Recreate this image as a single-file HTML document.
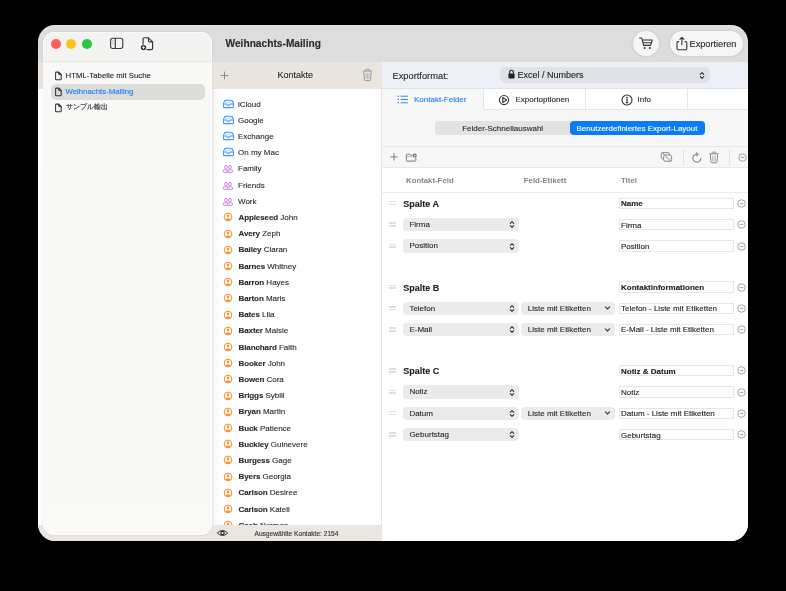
<!DOCTYPE html>
<html><head><meta charset="utf-8"><style>
*{box-sizing:border-box;margin:0;padding:0}
html,body{width:786px;height:591px;background:#000;overflow:hidden}
body{font-family:"Liberation Sans",sans-serif;color:#262626;position:relative}
#root{position:absolute;left:0;top:0;width:786px;height:591px;will-change:transform}
.a{position:absolute}
svg.a{overflow:visible}
.t{position:absolute;white-space:nowrap;line-height:1;-webkit-text-stroke:0.12px currentColor}
</style></head><body><div id="root">
<div class="a" style="left:38px;top:25px;width:710px;height:516px;border-radius:17px;overflow:hidden;background:#dddddd;box-shadow:inset 0 1px 0 rgba(255,255,255,.25)">
<div class="a" style="left:0;top:63px;width:343px;height:437px;background:#fff"></div>
<div class="a" style="left:0;top:37px;width:343px;height:26.8px;background:#ebe5df"></div>
<div class="a" style="left:0;top:500px;width:343px;height:16px;background:#ebe6e0"></div>
<div class="a" style="left:343px;top:37px;width:367px;height:479px;background:#fff"></div>
</div>
<svg class="a" style="left:219px;top:70px" width="11" height="11" viewBox="0 0 11 11"><path d="M5.5 1.6 V9.4 M1.6 5.5 H9.4" stroke="#8a8a8a" stroke-width="1"/></svg>
<div class="t" style="left:277.5px;top:71px;font-size:9px;font-weight:400;color:#2a2a2a;">Kontakte</div>
<svg class="a" style="left:361px;top:68px" width="13" height="14" viewBox="0 0 13 14"><path d="M2 3 H11" stroke="#9a9a9a" stroke-width="1"/><path d="M4.6 3 V2 Q4.6 1.3 5.3 1.3 H7.7 Q8.4 1.3 8.4 2 V3" fill="none" stroke="#9a9a9a" stroke-width="1"/><path d="M2.8 3.4 L3.5 11.8 Q3.6 12.6 4.4 12.6 H8.6 Q9.4 12.6 9.5 11.8 L10.2 3.4" fill="none" stroke="#9a9a9a" stroke-width="1"/><path d="M5 5 L5.2 11 M6.5 5 V11 M8 5 L7.8 11" stroke="#b0b0b0" stroke-width=".8"/></svg>
<div class="a" style="left:212px;top:88px;width:11px;height:437px;background:linear-gradient(90deg,rgba(0,0,0,.055),rgba(0,0,0,.02) 40%,rgba(0,0,0,0));"></div>
<div class="a" style="left:212px;top:88px;width:169px;height:437px;overflow:hidden"><svg class="a" style="left:9.8px;top:10.8px" width="13" height="10" viewBox="0 0 13 10"><path d="M1.5 8 V5 Q1.5 4.2 1.9 3.4 L2.8 1.9 Q3.2 1.3 4 1.3 H9 Q9.8 1.3 10.2 1.9 L11.1 3.4 Q11.5 4.2 11.5 5 V8 Q11.5 8.6 10.9 8.6 H2.1 Q1.5 8.6 1.5 8 Z" fill="none" stroke="#3d9af6" stroke-width="1.1" stroke-linejoin="round"/><path d="M1.5 5 H4.3 L6.5 6.6 L8.7 5 H11.5" fill="none" stroke="#3d9af6" stroke-width="1.1" stroke-linejoin="round"/><path d="M3.2 3.2 H9.8" stroke="#a5d0fa" stroke-width=".7"/></svg><div class="t" style="left:26px;top:13px;font-size:8px;color:#2a2a2a">iCloud</div><svg class="a" style="left:9.8px;top:27.0px" width="13" height="10" viewBox="0 0 13 10"><path d="M1.5 8 V5 Q1.5 4.2 1.9 3.4 L2.8 1.9 Q3.2 1.3 4 1.3 H9 Q9.8 1.3 10.2 1.9 L11.1 3.4 Q11.5 4.2 11.5 5 V8 Q11.5 8.6 10.9 8.6 H2.1 Q1.5 8.6 1.5 8 Z" fill="none" stroke="#3d9af6" stroke-width="1.1" stroke-linejoin="round"/><path d="M1.5 5 H4.3 L6.5 6.6 L8.7 5 H11.5" fill="none" stroke="#3d9af6" stroke-width="1.1" stroke-linejoin="round"/><path d="M3.2 3.2 H9.8" stroke="#a5d0fa" stroke-width=".7"/></svg><div class="t" style="left:26px;top:29px;font-size:8px;color:#2a2a2a">Google</div><svg class="a" style="left:9.8px;top:43.2px" width="13" height="10" viewBox="0 0 13 10"><path d="M1.5 8 V5 Q1.5 4.2 1.9 3.4 L2.8 1.9 Q3.2 1.3 4 1.3 H9 Q9.8 1.3 10.2 1.9 L11.1 3.4 Q11.5 4.2 11.5 5 V8 Q11.5 8.6 10.9 8.6 H2.1 Q1.5 8.6 1.5 8 Z" fill="none" stroke="#3d9af6" stroke-width="1.1" stroke-linejoin="round"/><path d="M1.5 5 H4.3 L6.5 6.6 L8.7 5 H11.5" fill="none" stroke="#3d9af6" stroke-width="1.1" stroke-linejoin="round"/><path d="M3.2 3.2 H9.8" stroke="#a5d0fa" stroke-width=".7"/></svg><div class="t" style="left:26px;top:45px;font-size:8px;color:#2a2a2a">Exchange</div><svg class="a" style="left:9.8px;top:59.4px" width="13" height="10" viewBox="0 0 13 10"><path d="M1.5 8 V5 Q1.5 4.2 1.9 3.4 L2.8 1.9 Q3.2 1.3 4 1.3 H9 Q9.8 1.3 10.2 1.9 L11.1 3.4 Q11.5 4.2 11.5 5 V8 Q11.5 8.6 10.9 8.6 H2.1 Q1.5 8.6 1.5 8 Z" fill="none" stroke="#3d9af6" stroke-width="1.1" stroke-linejoin="round"/><path d="M1.5 5 H4.3 L6.5 6.6 L8.7 5 H11.5" fill="none" stroke="#3d9af6" stroke-width="1.1" stroke-linejoin="round"/><path d="M3.2 3.2 H9.8" stroke="#a5d0fa" stroke-width=".7"/></svg><div class="t" style="left:26px;top:61px;font-size:8px;color:#2a2a2a">On my Mac</div><svg class="a" style="left:10px;top:76.3px" width="13" height="10" viewBox="0 0 13 10"><ellipse cx="3.9" cy="3.1" rx="1.3" ry="1.85" fill="none" stroke="#d57bee" stroke-width="1"/><ellipse cx="7.9" cy="3.1" rx="1.3" ry="1.85" fill="none" stroke="#d57bee" stroke-width="1"/><rect x="1.1" y="5.9" width="5" height="2.5" rx="1.25" fill="none" stroke="#d57bee" stroke-width="1"/><rect x="5.3" y="5.9" width="5.3" height="2.5" rx="1.25" fill="none" stroke="#d57bee" stroke-width="1"/></svg><div class="t" style="left:26px;top:77px;font-size:8px;color:#2a2a2a">Family</div><svg class="a" style="left:10px;top:92.5px" width="13" height="10" viewBox="0 0 13 10"><ellipse cx="3.9" cy="3.1" rx="1.3" ry="1.85" fill="none" stroke="#d57bee" stroke-width="1"/><ellipse cx="7.9" cy="3.1" rx="1.3" ry="1.85" fill="none" stroke="#d57bee" stroke-width="1"/><rect x="1.1" y="5.9" width="5" height="2.5" rx="1.25" fill="none" stroke="#d57bee" stroke-width="1"/><rect x="5.3" y="5.9" width="5.3" height="2.5" rx="1.25" fill="none" stroke="#d57bee" stroke-width="1"/></svg><div class="t" style="left:26px;top:94px;font-size:8px;color:#2a2a2a">Friends</div><svg class="a" style="left:10px;top:108.7px" width="13" height="10" viewBox="0 0 13 10"><ellipse cx="3.9" cy="3.1" rx="1.3" ry="1.85" fill="none" stroke="#d57bee" stroke-width="1"/><ellipse cx="7.9" cy="3.1" rx="1.3" ry="1.85" fill="none" stroke="#d57bee" stroke-width="1"/><rect x="1.1" y="5.9" width="5" height="2.5" rx="1.25" fill="none" stroke="#d57bee" stroke-width="1"/><rect x="5.3" y="5.9" width="5.3" height="2.5" rx="1.25" fill="none" stroke="#d57bee" stroke-width="1"/></svg><div class="t" style="left:26px;top:110px;font-size:8px;color:#2a2a2a">Work</div><svg class="a" style="left:11px;top:124.4px" width="10" height="10" viewBox="0 0 10 10"><circle cx="5" cy="5" r="3.85" fill="none" stroke="#fd8b25" stroke-width="1"/><ellipse cx="5" cy="4" rx="1.1" ry="1.4" fill="#fd8b25"/><path d="M2.3 7.3 Q3 6.4 5 6.4 Q7 6.4 7.7 7.3 Q6.8 8.6 5 8.6 Q3.2 8.6 2.3 7.3Z" fill="#fd8b25"/></svg><div class="t" style="left:26.5px;top:126px;font-size:8px;color:#2a2a2a"><b style="font-weight:700;letter-spacing:-.1px">Appleseed</b> John</div><svg class="a" style="left:11px;top:140.6px" width="10" height="10" viewBox="0 0 10 10"><circle cx="5" cy="5" r="3.85" fill="none" stroke="#fd8b25" stroke-width="1"/><ellipse cx="5" cy="4" rx="1.1" ry="1.4" fill="#fd8b25"/><path d="M2.3 7.3 Q3 6.4 5 6.4 Q7 6.4 7.7 7.3 Q6.8 8.6 5 8.6 Q3.2 8.6 2.3 7.3Z" fill="#fd8b25"/></svg><div class="t" style="left:26.5px;top:142px;font-size:8px;color:#2a2a2a"><b style="font-weight:700;letter-spacing:-.1px">Avery</b> Zeph</div><svg class="a" style="left:11px;top:156.8px" width="10" height="10" viewBox="0 0 10 10"><circle cx="5" cy="5" r="3.85" fill="none" stroke="#fd8b25" stroke-width="1"/><ellipse cx="5" cy="4" rx="1.1" ry="1.4" fill="#fd8b25"/><path d="M2.3 7.3 Q3 6.4 5 6.4 Q7 6.4 7.7 7.3 Q6.8 8.6 5 8.6 Q3.2 8.6 2.3 7.3Z" fill="#fd8b25"/></svg><div class="t" style="left:26.5px;top:158px;font-size:8px;color:#2a2a2a"><b style="font-weight:700;letter-spacing:-.1px">Bailey</b> Ciaran</div><svg class="a" style="left:11px;top:173.0px" width="10" height="10" viewBox="0 0 10 10"><circle cx="5" cy="5" r="3.85" fill="none" stroke="#fd8b25" stroke-width="1"/><ellipse cx="5" cy="4" rx="1.1" ry="1.4" fill="#fd8b25"/><path d="M2.3 7.3 Q3 6.4 5 6.4 Q7 6.4 7.7 7.3 Q6.8 8.6 5 8.6 Q3.2 8.6 2.3 7.3Z" fill="#fd8b25"/></svg><div class="t" style="left:26.5px;top:175px;font-size:8px;color:#2a2a2a"><b style="font-weight:700;letter-spacing:-.1px">Barnes</b> Whitney</div><svg class="a" style="left:11px;top:189.2px" width="10" height="10" viewBox="0 0 10 10"><circle cx="5" cy="5" r="3.85" fill="none" stroke="#fd8b25" stroke-width="1"/><ellipse cx="5" cy="4" rx="1.1" ry="1.4" fill="#fd8b25"/><path d="M2.3 7.3 Q3 6.4 5 6.4 Q7 6.4 7.7 7.3 Q6.8 8.6 5 8.6 Q3.2 8.6 2.3 7.3Z" fill="#fd8b25"/></svg><div class="t" style="left:26.5px;top:191px;font-size:8px;color:#2a2a2a"><b style="font-weight:700;letter-spacing:-.1px">Barron</b> Hayes</div><svg class="a" style="left:11px;top:205.4px" width="10" height="10" viewBox="0 0 10 10"><circle cx="5" cy="5" r="3.85" fill="none" stroke="#fd8b25" stroke-width="1"/><ellipse cx="5" cy="4" rx="1.1" ry="1.4" fill="#fd8b25"/><path d="M2.3 7.3 Q3 6.4 5 6.4 Q7 6.4 7.7 7.3 Q6.8 8.6 5 8.6 Q3.2 8.6 2.3 7.3Z" fill="#fd8b25"/></svg><div class="t" style="left:26.5px;top:207px;font-size:8px;color:#2a2a2a"><b style="font-weight:700;letter-spacing:-.1px">Barton</b> Maris</div><svg class="a" style="left:11px;top:221.6px" width="10" height="10" viewBox="0 0 10 10"><circle cx="5" cy="5" r="3.85" fill="none" stroke="#fd8b25" stroke-width="1"/><ellipse cx="5" cy="4" rx="1.1" ry="1.4" fill="#fd8b25"/><path d="M2.3 7.3 Q3 6.4 5 6.4 Q7 6.4 7.7 7.3 Q6.8 8.6 5 8.6 Q3.2 8.6 2.3 7.3Z" fill="#fd8b25"/></svg><div class="t" style="left:26.5px;top:223px;font-size:8px;color:#2a2a2a"><b style="font-weight:700;letter-spacing:-.1px">Bates</b> Lila</div><svg class="a" style="left:11px;top:237.8px" width="10" height="10" viewBox="0 0 10 10"><circle cx="5" cy="5" r="3.85" fill="none" stroke="#fd8b25" stroke-width="1"/><ellipse cx="5" cy="4" rx="1.1" ry="1.4" fill="#fd8b25"/><path d="M2.3 7.3 Q3 6.4 5 6.4 Q7 6.4 7.7 7.3 Q6.8 8.6 5 8.6 Q3.2 8.6 2.3 7.3Z" fill="#fd8b25"/></svg><div class="t" style="left:26.5px;top:239px;font-size:8px;color:#2a2a2a"><b style="font-weight:700;letter-spacing:-.1px">Baxter</b> Maisie</div><svg class="a" style="left:11px;top:254.0px" width="10" height="10" viewBox="0 0 10 10"><circle cx="5" cy="5" r="3.85" fill="none" stroke="#fd8b25" stroke-width="1"/><ellipse cx="5" cy="4" rx="1.1" ry="1.4" fill="#fd8b25"/><path d="M2.3 7.3 Q3 6.4 5 6.4 Q7 6.4 7.7 7.3 Q6.8 8.6 5 8.6 Q3.2 8.6 2.3 7.3Z" fill="#fd8b25"/></svg><div class="t" style="left:26.5px;top:256px;font-size:8px;color:#2a2a2a"><b style="font-weight:700;letter-spacing:-.1px">Blanchard</b> Faith</div><svg class="a" style="left:11px;top:270.2px" width="10" height="10" viewBox="0 0 10 10"><circle cx="5" cy="5" r="3.85" fill="none" stroke="#fd8b25" stroke-width="1"/><ellipse cx="5" cy="4" rx="1.1" ry="1.4" fill="#fd8b25"/><path d="M2.3 7.3 Q3 6.4 5 6.4 Q7 6.4 7.7 7.3 Q6.8 8.6 5 8.6 Q3.2 8.6 2.3 7.3Z" fill="#fd8b25"/></svg><div class="t" style="left:26.5px;top:272px;font-size:8px;color:#2a2a2a"><b style="font-weight:700;letter-spacing:-.1px">Booker</b> John</div><svg class="a" style="left:11px;top:286.4px" width="10" height="10" viewBox="0 0 10 10"><circle cx="5" cy="5" r="3.85" fill="none" stroke="#fd8b25" stroke-width="1"/><ellipse cx="5" cy="4" rx="1.1" ry="1.4" fill="#fd8b25"/><path d="M2.3 7.3 Q3 6.4 5 6.4 Q7 6.4 7.7 7.3 Q6.8 8.6 5 8.6 Q3.2 8.6 2.3 7.3Z" fill="#fd8b25"/></svg><div class="t" style="left:26.5px;top:288px;font-size:8px;color:#2a2a2a"><b style="font-weight:700;letter-spacing:-.1px">Bowen</b> Cora</div><svg class="a" style="left:11px;top:302.6px" width="10" height="10" viewBox="0 0 10 10"><circle cx="5" cy="5" r="3.85" fill="none" stroke="#fd8b25" stroke-width="1"/><ellipse cx="5" cy="4" rx="1.1" ry="1.4" fill="#fd8b25"/><path d="M2.3 7.3 Q3 6.4 5 6.4 Q7 6.4 7.7 7.3 Q6.8 8.6 5 8.6 Q3.2 8.6 2.3 7.3Z" fill="#fd8b25"/></svg><div class="t" style="left:26.5px;top:304px;font-size:8px;color:#2a2a2a"><b style="font-weight:700;letter-spacing:-.1px">Briggs</b> Sybill</div><svg class="a" style="left:11px;top:318.8px" width="10" height="10" viewBox="0 0 10 10"><circle cx="5" cy="5" r="3.85" fill="none" stroke="#fd8b25" stroke-width="1"/><ellipse cx="5" cy="4" rx="1.1" ry="1.4" fill="#fd8b25"/><path d="M2.3 7.3 Q3 6.4 5 6.4 Q7 6.4 7.7 7.3 Q6.8 8.6 5 8.6 Q3.2 8.6 2.3 7.3Z" fill="#fd8b25"/></svg><div class="t" style="left:26.5px;top:320px;font-size:8px;color:#2a2a2a"><b style="font-weight:700;letter-spacing:-.1px">Bryan</b> Martin</div><svg class="a" style="left:11px;top:335.0px" width="10" height="10" viewBox="0 0 10 10"><circle cx="5" cy="5" r="3.85" fill="none" stroke="#fd8b25" stroke-width="1"/><ellipse cx="5" cy="4" rx="1.1" ry="1.4" fill="#fd8b25"/><path d="M2.3 7.3 Q3 6.4 5 6.4 Q7 6.4 7.7 7.3 Q6.8 8.6 5 8.6 Q3.2 8.6 2.3 7.3Z" fill="#fd8b25"/></svg><div class="t" style="left:26.5px;top:337px;font-size:8px;color:#2a2a2a"><b style="font-weight:700;letter-spacing:-.1px">Buck</b> Patience</div><svg class="a" style="left:11px;top:351.2px" width="10" height="10" viewBox="0 0 10 10"><circle cx="5" cy="5" r="3.85" fill="none" stroke="#fd8b25" stroke-width="1"/><ellipse cx="5" cy="4" rx="1.1" ry="1.4" fill="#fd8b25"/><path d="M2.3 7.3 Q3 6.4 5 6.4 Q7 6.4 7.7 7.3 Q6.8 8.6 5 8.6 Q3.2 8.6 2.3 7.3Z" fill="#fd8b25"/></svg><div class="t" style="left:26.5px;top:353px;font-size:8px;color:#2a2a2a"><b style="font-weight:700;letter-spacing:-.1px">Buckley</b> Guinevere</div><svg class="a" style="left:11px;top:367.4px" width="10" height="10" viewBox="0 0 10 10"><circle cx="5" cy="5" r="3.85" fill="none" stroke="#fd8b25" stroke-width="1"/><ellipse cx="5" cy="4" rx="1.1" ry="1.4" fill="#fd8b25"/><path d="M2.3 7.3 Q3 6.4 5 6.4 Q7 6.4 7.7 7.3 Q6.8 8.6 5 8.6 Q3.2 8.6 2.3 7.3Z" fill="#fd8b25"/></svg><div class="t" style="left:26.5px;top:369px;font-size:8px;color:#2a2a2a"><b style="font-weight:700;letter-spacing:-.1px">Burgess</b> Gage</div><svg class="a" style="left:11px;top:383.6px" width="10" height="10" viewBox="0 0 10 10"><circle cx="5" cy="5" r="3.85" fill="none" stroke="#fd8b25" stroke-width="1"/><ellipse cx="5" cy="4" rx="1.1" ry="1.4" fill="#fd8b25"/><path d="M2.3 7.3 Q3 6.4 5 6.4 Q7 6.4 7.7 7.3 Q6.8 8.6 5 8.6 Q3.2 8.6 2.3 7.3Z" fill="#fd8b25"/></svg><div class="t" style="left:26.5px;top:385px;font-size:8px;color:#2a2a2a"><b style="font-weight:700;letter-spacing:-.1px">Byers</b> Georgia</div><svg class="a" style="left:11px;top:399.8px" width="10" height="10" viewBox="0 0 10 10"><circle cx="5" cy="5" r="3.85" fill="none" stroke="#fd8b25" stroke-width="1"/><ellipse cx="5" cy="4" rx="1.1" ry="1.4" fill="#fd8b25"/><path d="M2.3 7.3 Q3 6.4 5 6.4 Q7 6.4 7.7 7.3 Q6.8 8.6 5 8.6 Q3.2 8.6 2.3 7.3Z" fill="#fd8b25"/></svg><div class="t" style="left:26.5px;top:401px;font-size:8px;color:#2a2a2a"><b style="font-weight:700;letter-spacing:-.1px">Carlson</b> Desiree</div><svg class="a" style="left:11px;top:416.0px" width="10" height="10" viewBox="0 0 10 10"><circle cx="5" cy="5" r="3.85" fill="none" stroke="#fd8b25" stroke-width="1"/><ellipse cx="5" cy="4" rx="1.1" ry="1.4" fill="#fd8b25"/><path d="M2.3 7.3 Q3 6.4 5 6.4 Q7 6.4 7.7 7.3 Q6.8 8.6 5 8.6 Q3.2 8.6 2.3 7.3Z" fill="#fd8b25"/></svg><div class="t" style="left:26.5px;top:418px;font-size:8px;color:#2a2a2a"><b style="font-weight:700;letter-spacing:-.1px">Carlson</b> Katell</div><svg class="a" style="left:11px;top:432.2px" width="10" height="10" viewBox="0 0 10 10"><circle cx="5" cy="5" r="3.85" fill="none" stroke="#fd8b25" stroke-width="1"/><ellipse cx="5" cy="4" rx="1.1" ry="1.4" fill="#fd8b25"/><path d="M2.3 7.3 Q3 6.4 5 6.4 Q7 6.4 7.7 7.3 Q6.8 8.6 5 8.6 Q3.2 8.6 2.3 7.3Z" fill="#fd8b25"/></svg><div class="t" style="left:26.5px;top:434px;font-size:8px;color:#2a2a2a"><b style="font-weight:700;letter-spacing:-.1px">Cash</b> Norman</div></div>
<svg class="a" style="left:216px;top:528px" width="14" height="10" viewBox="0 0 14 10"><path d="M1.3 5 Q6.5 0 11.7 5 Q6.5 10 1.3 5Z" fill="none" stroke="#3a3a3a" stroke-width="1"/><circle cx="6.5" cy="5.1" r="1.7" fill="none" stroke="#2a2a2a" stroke-width="1.15"/></svg>
<div class="t" style="left:254.5px;top:531px;font-size:6.6px;font-weight:400;color:#333;">Ausgewählte Kontakte: 2154</div>
<div class="a" style="left:43px;top:32px;width:169px;height:503px;border-radius:11px;background:linear-gradient(#f3f3f2 0,#f3f3f2 29px,#f8f8f7 30px,#f9f9f8 100%);box-shadow:0 0 2.5px rgba(0,0,0,.1),inset 0 0 0 .8px rgba(255,255,255,.7)"></div>
<div class="a" style="left:43px;top:61px;width:169px;height:1px;background:#e6e5e3;"></div>
<div class="a" style="left:51px;top:83.7px;width:154px;height:16px;background:#dcdcdb;border-radius:5px"></div>
<div class="a" style="left:51px;top:38.8px;width:10px;height:10px;background:#ff5f57;border-radius:50%"></div>
<div class="a" style="left:66.3px;top:38.8px;width:10px;height:10px;background:#fcc21b;border-radius:50%"></div>
<div class="a" style="left:81.8px;top:38.8px;width:10px;height:10px;background:#28c840;border-radius:50%"></div>
<svg class="a" style="left:109px;top:37px" width="15" height="13" viewBox="0 0 15 13"><rect x="1.6" y="1.3" width="12.2" height="10.2" rx="2.2" fill="none" stroke="#3a3a3a" stroke-width="1.1"/><line x1="6.3" y1="1.3" x2="6.3" y2="11.5" stroke="#3a3a3a" stroke-width="1.2"/><path d="M3.5 3.6 H4.3 M3.5 5.2 H4.3 M3.5 6.8 H4.3" stroke="#888" stroke-width=".8"/></svg>
<svg class="a" style="left:139px;top:36px" width="16" height="16" viewBox="0 0 16 16"><path d="M4.1 8.6 V3.1 Q4.1 1.7 5.5 1.7 H9.4 L13.6 5.9 V12.3 Q13.6 13.6 12.3 13.6 H7.6" fill="none" stroke="#333" stroke-width="1.15"/><path d="M9.4 1.7 V4.5 Q9.4 5.9 10.8 5.9 H13.6" fill="none" stroke="#333" stroke-width="1.1"/><circle cx="4.5" cy="11.6" r="2.7" fill="#333"/><path d="M4.5 10.1 V13.1 M3 11.6 H6" stroke="#f3f3f3" stroke-width=".9"/></svg>
<svg class="a" style="left:54px;top:70.5px" width="9" height="10" viewBox="0 0 9 10"><path d="M1.6 1.7 Q1.6 1.1 2.2 1.1 H4.7 L7.2 3.6 V8.2 Q7.2 8.8 6.6 8.8 H2.2 Q1.6 8.8 1.6 8.2 Z" fill="none" stroke="#333" stroke-width="1.05" stroke-linejoin="round"/><path d="M4.7 1.1 V3.1 Q4.7 3.6 5.2 3.6 H7.2 Z" fill="#555" stroke="#333" stroke-width=".9" stroke-linejoin="round"/></svg>
<svg class="a" style="left:54px;top:86.5px" width="9" height="10" viewBox="0 0 9 10"><path d="M1.6 1.7 Q1.6 1.1 2.2 1.1 H4.7 L7.2 3.6 V8.2 Q7.2 8.8 6.6 8.8 H2.2 Q1.6 8.8 1.6 8.2 Z" fill="none" stroke="#333" stroke-width="1.05" stroke-linejoin="round"/><path d="M4.7 1.1 V3.1 Q4.7 3.6 5.2 3.6 H7.2 Z" fill="#555" stroke="#333" stroke-width=".9" stroke-linejoin="round"/></svg>
<svg class="a" style="left:54px;top:102.5px" width="9" height="10" viewBox="0 0 9 10"><path d="M1.6 1.7 Q1.6 1.1 2.2 1.1 H4.7 L7.2 3.6 V8.2 Q7.2 8.8 6.6 8.8 H2.2 Q1.6 8.8 1.6 8.2 Z" fill="none" stroke="#333" stroke-width="1.05" stroke-linejoin="round"/><path d="M4.7 1.1 V3.1 Q4.7 3.6 5.2 3.6 H7.2 Z" fill="#555" stroke="#333" stroke-width=".9" stroke-linejoin="round"/></svg>
<div class="t" style="left:65.5px;top:72px;font-size:7.8px;font-weight:400;color:#262626;">HTML-Tabelle mit Suche</div>
<div class="t" style="left:65.5px;top:88px;font-size:7.8px;font-weight:400;color:#1a7ef5;">Weihnachts-Mailing</div>
<div class="t" style="left:65.5px;top:103px;font-size:7px;font-weight:400;color:#262626;">サンプル輸出</div>
<div class="t" style="left:225.5px;top:39px;font-size:10.2px;font-weight:700;color:#2a2a2a;">Weihnachts-Mailing</div>
<div class="a" style="left:633px;top:31px;width:26px;height:25px;background:#f6f6f6;border-radius:13px;box-shadow:0 0 3px rgba(0,0,0,.13)"></div>
<svg class="a" style="left:638px;top:36px" width="16" height="15" viewBox="0 0 16 15"><path d="M1.6 2 H3.2 Q3.8 2 4 2.6 L5.6 9.4 H12.6 L14.2 4 H4.4" fill="none" stroke="#333" stroke-width="1.1" stroke-linejoin="round" stroke-linecap="round"/><line x1="5" y1="6.8" x2="13.4" y2="6.8" stroke="#333" stroke-width="1"/><circle cx="6.6" cy="12" r="1" fill="#333"/><circle cx="11.8" cy="12" r="1" fill="#333"/></svg>
<div class="a" style="left:670px;top:31px;width:72.5px;height:25px;background:#f6f6f6;border-radius:12.5px;box-shadow:0 0 3px rgba(0,0,0,.13)"></div>
<svg class="a" style="left:675px;top:36px" width="14" height="15" viewBox="0 0 14 15"><path d="M4.2 5.6 H3.2 Q2 5.6 2 6.8 V12.6 Q2 13.8 3.2 13.8 H10.6 Q11.8 13.8 11.8 12.6 V6.8 Q11.8 5.6 10.6 5.6 H9.6" fill="none" stroke="#333" stroke-width="1.1"/><line x1="6.9" y1="1.4" x2="6.9" y2="9.2" stroke="#333" stroke-width="1.1"/><path d="M4.6 3.6 L6.9 1.3 L9.2 3.6" fill="none" stroke="#333" stroke-width="1.1" stroke-linejoin="round"/></svg>
<div class="t" style="left:689.5px;top:40px;font-size:9.2px;font-weight:400;color:#2a2a2a;">Exportieren</div>
<div class="a" style="left:381px;top:62px;width:367px;height:26px;background:#edf0f7;"></div>
<div class="t" style="left:392.5px;top:72px;font-size:9.3px;font-weight:400;color:#2a2a2a;">Exportformat:</div>
<div class="a" style="left:499.5px;top:67.3px;width:210.5px;height:15.3px;background:#e0e2e7;border-radius:5px"></div>
<svg class="a" style="left:507px;top:69px" width="9" height="11" viewBox="0 0 9 11"><path d="M2.6 4.8 V3.4 Q2.6 1.3 4.5 1.3 Q6.4 1.3 6.4 3.4 V4.8" fill="none" stroke="#222" stroke-width="1.1"/><rect x="1.4" y="4.6" width="6.2" height="5" rx="1" fill="#222"/></svg>
<div class="t" style="left:517.5px;top:71px;font-size:9px;font-weight:400;color:#222;">Excel / Numbers</div>
<svg class="a" style="left:699px;top:70.5px" width="6" height="9" viewBox="0 0 6 9"><path d="M1.3 3.3 L3 1.7 L4.7 3.3 M1.3 5.7 L3 7.3 L4.7 5.7" fill="none" stroke="#333" stroke-width="1.15" stroke-linecap="round" stroke-linejoin="round"/></svg>
<div class="a" style="left:381px;top:88px;width:367px;height:79.5px;background:#f7f7f7;"></div>
<div class="a" style="left:381px;top:62px;width:1px;height:479px;background:#e4e4e4;"></div>
<div class="a" style="left:381px;top:88px;width:367px;height:1px;background:#e2e3e6;"></div>
<div class="a" style="left:482.5px;top:89px;width:265.5px;height:20.5px;background:#fff;border-left:1px solid #e6e6e6;border-bottom:1px solid #e6e6e6"></div>
<div class="a" style="left:585px;top:89px;width:1px;height:20px;background:#e6e6e6;"></div>
<div class="a" style="left:687px;top:89px;width:1px;height:20px;background:#e6e6e6;"></div>
<svg class="a" style="left:397px;top:95px" width="12" height="9" viewBox="0 0 12 9"><circle cx="1.3" cy="1.2" r=".75" fill="#2a8cf7"/><circle cx="1.3" cy="4.5" r=".75" fill="#2a8cf7"/><circle cx="1.3" cy="7.8" r=".75" fill="#2a8cf7"/><path d="M3.6 1.2 H11 M3.6 4.5 H11 M3.6 7.8 H11" stroke="#2a8cf7" stroke-width="1"/></svg>
<div class="t" style="left:414px;top:96px;font-size:8px;font-weight:400;color:#1f83f4;">Kontakt-Felder</div>
<svg class="a" style="left:498.3px;top:93.7px" width="12" height="12" viewBox="0 0 12 12"><circle cx="6" cy="6" r="4.55" fill="none" stroke="#333" stroke-width="1.15"/><path d="M4.8 3.4 L8.6 6 L4.8 8.6 Z" fill="none" stroke="#333" stroke-width="1.1" stroke-linejoin="round"/></svg>
<div class="t" style="left:515.5px;top:96px;font-size:8px;font-weight:400;color:#2a2a2a;">Exportoptionen</div>
<svg class="a" style="left:620.5px;top:93.7px" width="12" height="12" viewBox="0 0 12 12"><circle cx="6" cy="6" r="5" fill="none" stroke="#333" stroke-width="1.1"/><circle cx="6" cy="3.6" r=".8" fill="#333"/><path d="M5 5.3 H6.1 V8.5 M4.9 8.6 H7.2" fill="none" stroke="#333" stroke-width="1.05"/></svg>
<div class="t" style="left:637.5px;top:96px;font-size:8px;font-weight:400;color:#2a2a2a;">Info</div>
<div class="a" style="left:434.7px;top:121.3px;width:270.3px;height:13.7px;background:#e3e3e3;border-radius:4px"></div>
<div class="a" style="left:570px;top:121.3px;width:135px;height:13.7px;background:#0b7cf9;border-radius:4px"></div>
<div class="t" style="left:462.2px;top:125px;font-size:8px;font-weight:400;color:#2a2a2a;">Felder-Schnellauswahl</div>
<div class="t" style="left:576.5px;top:125px;font-size:8px;font-weight:400;color:#fff;">Benutzerdefiniertes Export-Layout</div>
<div class="a" style="left:381px;top:145.5px;width:367px;height:1px;background:#e8e8e8;"></div>
<div class="a" style="left:381px;top:167px;width:367px;height:1px;background:#e8e8e8;"></div>
<svg class="a" style="left:389px;top:152px" width="10" height="10" viewBox="0 0 10 10"><path d="M5 1.2 V8.6 M1.3 4.9 H8.7" stroke="#7a7a7a" stroke-width="1"/></svg>
<svg class="a" style="left:405px;top:152.5px" width="13" height="10" viewBox="0 0 13 10"><path d="M7.6 2.2 H5.5 L4.5 1.1 H2.2 Q1.3 1.1 1.3 2 V7.3 Q1.3 8.1 2.1 8.1 H10 Q10.8 8.1 10.8 7.3 V4.6" fill="none" stroke="#7a7a7a" stroke-width="1"/><path d="M1.3 3.6 H7" stroke="#9a9a9a" stroke-width=".7"/><circle cx="9.7" cy="2.6" r="1.45" fill="none" stroke="#666" stroke-width="1.1"/></svg>
<svg class="a" style="left:660px;top:151px" width="13" height="12" viewBox="0 0 13 12"><rect x="1.2" y="1.6" width="8" height="6.2" rx="1.4" fill="none" stroke="#8a8a8a" stroke-width="1"/><rect x="3.6" y="4" width="8" height="6.2" rx="1.4" fill="#f6f6f6" stroke="#8a8a8a" stroke-width="1"/><path d="M1.8 1.4 L11.2 10.6" stroke="#8a8a8a" stroke-width="1"/></svg>
<div class="a" style="left:683px;top:149px;width:1px;height:16px;background:#e2e2e2;"></div>
<svg class="a" style="left:691px;top:151.5px" width="12" height="12" viewBox="0 0 12 12"><path d="M9.8 6.2 A4 4 0 1 1 6 2.2" fill="none" stroke="#8a8a8a" stroke-width="1.1" stroke-linecap="round"/><path d="M5.2 0.8 L7.2 2.2 L5.4 3.8" fill="none" stroke="#8a8a8a" stroke-width="1.1" stroke-linecap="round" stroke-linejoin="round"/></svg>
<svg class="a" style="left:707.5px;top:150.5px" width="12" height="13" viewBox="0 0 12 13"><path d="M1.4 2.8 H10.6" stroke="#8a8a8a" stroke-width="1"/><path d="M4.2 2.8 V1.8 Q4.2 1.1 4.9 1.1 H7.1 Q7.8 1.1 7.8 1.8 V2.8" fill="none" stroke="#8a8a8a" stroke-width="1"/><path d="M2.3 3.2 L3 11 Q3.1 11.8 3.9 11.8 H8.1 Q8.9 11.8 9 11 L9.7 3.2" fill="none" stroke="#8a8a8a" stroke-width="1"/><path d="M4.6 4.6 V10.4 M6 4.6 V10.4 M7.4 4.6 V10.4" stroke="#b5b5b5" stroke-width=".8"/></svg>
<div class="a" style="left:729px;top:149px;width:1px;height:16px;background:#e2e2e2;"></div>
<svg class="a" style="left:737.0px;top:151.5px" width="11" height="11" viewBox="0 0 11 11"><circle cx="5.5" cy="5.5" r="3.75" fill="none" stroke="#9c9c9c" stroke-width=".9"/><path d="M3.7 5.5 H7.3" stroke="#9c9c9c" stroke-width=".85"/></svg>
<div class="t" style="left:406px;top:177px;font-size:7.8px;font-weight:700;color:#858585;-webkit-text-stroke:0">Kontakt-Feld</div>
<div class="t" style="left:523.8px;top:177px;font-size:7.8px;font-weight:700;color:#858585;-webkit-text-stroke:0">Feld-Etikett</div>
<div class="t" style="left:621px;top:177px;font-size:7.8px;font-weight:700;color:#858585;-webkit-text-stroke:0">Titel</div>
<div class="a" style="left:381px;top:191.5px;width:367px;height:1px;background:#ececec;"></div>
<div class="a" style="left:388.8px;top:200.8px;width:7.2px;height:1.7px;background:#dedede;"></div>
<div class="a" style="left:388.8px;top:203.6px;width:7.2px;height:1.7px;background:#dedede;"></div>
<div class="t" style="left:403.3px;top:200px;font-size:9px;font-weight:700;color:#222;">Spalte A</div>
<div class="a" style="left:619.3px;top:197.6px;width:114.5px;height:11.4px;background:#fff;border:1px solid #e6e6e6"></div>
<div class="t" style="left:621px;top:200px;font-size:8px;font-weight:700;color:#222;">Name</div>
<svg class="a" style="left:736.3px;top:197.8px" width="11" height="11" viewBox="0 0 11 11"><circle cx="5.5" cy="5.5" r="3.75" fill="none" stroke="#9c9c9c" stroke-width=".9"/><path d="M3.7 5.5 H7.3" stroke="#9c9c9c" stroke-width=".85"/></svg>
<div class="a" style="left:388.8px;top:222.2px;width:7.2px;height:1.7px;background:#dedede;"></div>
<div class="a" style="left:388.8px;top:225.0px;width:7.2px;height:1.7px;background:#dedede;"></div>
<div class="a" style="left:402.8px;top:218.0px;width:116.2px;height:13.4px;background:#ebebeb;border-radius:4px"></div>
<div class="t" style="left:409.4px;top:221px;font-size:8px;font-weight:400;color:#2a2a2a;">Firma</div>
<svg class="a" style="left:509.0px;top:220.2px" width="6" height="9" viewBox="0 0 6 9"><path d="M1.3 3.3 L3 1.7 L4.7 3.3 M1.3 5.7 L3 7.3 L4.7 5.7" fill="none" stroke="#333" stroke-width="1.15" stroke-linecap="round" stroke-linejoin="round"/></svg>
<div class="a" style="left:619.3px;top:219.0px;width:114.5px;height:11.4px;background:#fff;border:1px solid #e6e6e6"></div>
<div class="t" style="left:621px;top:222px;font-size:8px;font-weight:400;color:#222;">Firma</div>
<svg class="a" style="left:736.3px;top:219.2px" width="11" height="11" viewBox="0 0 11 11"><circle cx="5.5" cy="5.5" r="3.75" fill="none" stroke="#9c9c9c" stroke-width=".9"/><path d="M3.7 5.5 H7.3" stroke="#9c9c9c" stroke-width=".85"/></svg>
<div class="a" style="left:388.8px;top:243.5px;width:7.2px;height:1.7px;background:#dedede;"></div>
<div class="a" style="left:388.8px;top:246.3px;width:7.2px;height:1.7px;background:#dedede;"></div>
<div class="a" style="left:402.8px;top:239.3px;width:116.2px;height:13.4px;background:#ebebeb;border-radius:4px"></div>
<div class="t" style="left:409.4px;top:242px;font-size:8px;font-weight:400;color:#2a2a2a;">Position</div>
<svg class="a" style="left:509.0px;top:241.5px" width="6" height="9" viewBox="0 0 6 9"><path d="M1.3 3.3 L3 1.7 L4.7 3.3 M1.3 5.7 L3 7.3 L4.7 5.7" fill="none" stroke="#333" stroke-width="1.15" stroke-linecap="round" stroke-linejoin="round"/></svg>
<div class="a" style="left:619.3px;top:240.3px;width:114.5px;height:11.4px;background:#fff;border:1px solid #e6e6e6"></div>
<div class="t" style="left:621px;top:243px;font-size:8px;font-weight:400;color:#222;">Position</div>
<svg class="a" style="left:736.3px;top:240.5px" width="11" height="11" viewBox="0 0 11 11"><circle cx="5.5" cy="5.5" r="3.75" fill="none" stroke="#9c9c9c" stroke-width=".9"/><path d="M3.7 5.5 H7.3" stroke="#9c9c9c" stroke-width=".85"/></svg>
<div class="a" style="left:388.8px;top:284.5px;width:7.2px;height:1.7px;background:#dedede;"></div>
<div class="a" style="left:388.8px;top:287.3px;width:7.2px;height:1.7px;background:#dedede;"></div>
<div class="t" style="left:403.3px;top:284px;font-size:9px;font-weight:700;color:#222;">Spalte B</div>
<div class="a" style="left:619.3px;top:281.3px;width:114.5px;height:11.4px;background:#fff;border:1px solid #e6e6e6"></div>
<div class="t" style="left:621px;top:284px;font-size:8px;font-weight:700;color:#222;">Kontaktinformationen</div>
<svg class="a" style="left:736.3px;top:281.5px" width="11" height="11" viewBox="0 0 11 11"><circle cx="5.5" cy="5.5" r="3.75" fill="none" stroke="#9c9c9c" stroke-width=".9"/><path d="M3.7 5.5 H7.3" stroke="#9c9c9c" stroke-width=".85"/></svg>
<div class="a" style="left:388.8px;top:305.9px;width:7.2px;height:1.7px;background:#dedede;"></div>
<div class="a" style="left:388.8px;top:308.7px;width:7.2px;height:1.7px;background:#dedede;"></div>
<div class="a" style="left:402.8px;top:301.7px;width:116.2px;height:13.4px;background:#ebebeb;border-radius:4px"></div>
<div class="t" style="left:409.4px;top:305px;font-size:8px;font-weight:400;color:#2a2a2a;">Telefon</div>
<svg class="a" style="left:509.0px;top:303.9px" width="6" height="9" viewBox="0 0 6 9"><path d="M1.3 3.3 L3 1.7 L4.7 3.3 M1.3 5.7 L3 7.3 L4.7 5.7" fill="none" stroke="#333" stroke-width="1.15" stroke-linecap="round" stroke-linejoin="round"/></svg>
<div class="a" style="left:521.2px;top:301.7px;width:93.8px;height:13.4px;background:#ebebeb;border-radius:4px"></div>
<div class="t" style="left:527.8px;top:305px;font-size:8px;font-weight:400;color:#2a2a2a;">Liste mit Etiketten</div>
<svg class="a" style="left:604.0px;top:305.4px" width="7" height="6" viewBox="0 0 7 6"><path d="M1.4 1.9 L3.5 4 L5.6 1.9" fill="none" stroke="#444" stroke-width="1.3" stroke-linecap="round" stroke-linejoin="round"/></svg>
<div class="a" style="left:619.3px;top:302.7px;width:114.5px;height:11.4px;background:#fff;border:1px solid #e6e6e6"></div>
<div class="t" style="left:621px;top:305px;font-size:8px;font-weight:400;color:#222;">Telefon - Liste mit Etiketten</div>
<svg class="a" style="left:736.3px;top:302.9px" width="11" height="11" viewBox="0 0 11 11"><circle cx="5.5" cy="5.5" r="3.75" fill="none" stroke="#9c9c9c" stroke-width=".9"/><path d="M3.7 5.5 H7.3" stroke="#9c9c9c" stroke-width=".85"/></svg>
<div class="a" style="left:388.8px;top:327.2px;width:7.2px;height:1.7px;background:#dedede;"></div>
<div class="a" style="left:388.8px;top:330.0px;width:7.2px;height:1.7px;background:#dedede;"></div>
<div class="a" style="left:402.8px;top:323.0px;width:116.2px;height:13.4px;background:#ebebeb;border-radius:4px"></div>
<div class="t" style="left:409.4px;top:326px;font-size:8px;font-weight:400;color:#2a2a2a;">E-Mail</div>
<svg class="a" style="left:509.0px;top:325.2px" width="6" height="9" viewBox="0 0 6 9"><path d="M1.3 3.3 L3 1.7 L4.7 3.3 M1.3 5.7 L3 7.3 L4.7 5.7" fill="none" stroke="#333" stroke-width="1.15" stroke-linecap="round" stroke-linejoin="round"/></svg>
<div class="a" style="left:521.2px;top:323.0px;width:93.8px;height:13.4px;background:#ebebeb;border-radius:4px"></div>
<div class="t" style="left:527.8px;top:326px;font-size:8px;font-weight:400;color:#2a2a2a;">Liste mit Etiketten</div>
<svg class="a" style="left:604.0px;top:326.7px" width="7" height="6" viewBox="0 0 7 6"><path d="M1.4 1.9 L3.5 4 L5.6 1.9" fill="none" stroke="#444" stroke-width="1.3" stroke-linecap="round" stroke-linejoin="round"/></svg>
<div class="a" style="left:619.3px;top:324.0px;width:114.5px;height:11.4px;background:#fff;border:1px solid #e6e6e6"></div>
<div class="t" style="left:621px;top:326px;font-size:8px;font-weight:400;color:#222;">E-Mail - Liste mit Etiketten</div>
<svg class="a" style="left:736.3px;top:324.2px" width="11" height="11" viewBox="0 0 11 11"><circle cx="5.5" cy="5.5" r="3.75" fill="none" stroke="#9c9c9c" stroke-width=".9"/><path d="M3.7 5.5 H7.3" stroke="#9c9c9c" stroke-width=".85"/></svg>
<div class="a" style="left:388.8px;top:368.1px;width:7.2px;height:1.7px;background:#dedede;"></div>
<div class="a" style="left:388.8px;top:370.9px;width:7.2px;height:1.7px;background:#dedede;"></div>
<div class="t" style="left:403.3px;top:367px;font-size:9px;font-weight:700;color:#222;">Spalte C</div>
<div class="a" style="left:619.3px;top:364.9px;width:114.5px;height:11.4px;background:#fff;border:1px solid #e6e6e6"></div>
<div class="t" style="left:621px;top:368px;font-size:8px;font-weight:700;color:#222;">Notiz &amp; Datum</div>
<svg class="a" style="left:736.3px;top:365.1px" width="11" height="11" viewBox="0 0 11 11"><circle cx="5.5" cy="5.5" r="3.75" fill="none" stroke="#9c9c9c" stroke-width=".9"/><path d="M3.7 5.5 H7.3" stroke="#9c9c9c" stroke-width=".85"/></svg>
<div class="a" style="left:388.8px;top:389.5px;width:7.2px;height:1.7px;background:#dedede;"></div>
<div class="a" style="left:388.8px;top:392.3px;width:7.2px;height:1.7px;background:#dedede;"></div>
<div class="a" style="left:402.8px;top:385.3px;width:116.2px;height:13.4px;background:#ebebeb;border-radius:4px"></div>
<div class="t" style="left:409.4px;top:388px;font-size:8px;font-weight:400;color:#2a2a2a;">Notiz</div>
<svg class="a" style="left:509.0px;top:387.5px" width="6" height="9" viewBox="0 0 6 9"><path d="M1.3 3.3 L3 1.7 L4.7 3.3 M1.3 5.7 L3 7.3 L4.7 5.7" fill="none" stroke="#333" stroke-width="1.15" stroke-linecap="round" stroke-linejoin="round"/></svg>
<div class="a" style="left:619.3px;top:386.3px;width:114.5px;height:11.4px;background:#fff;border:1px solid #e6e6e6"></div>
<div class="t" style="left:621px;top:389px;font-size:8px;font-weight:400;color:#222;">Notiz</div>
<svg class="a" style="left:736.3px;top:386.5px" width="11" height="11" viewBox="0 0 11 11"><circle cx="5.5" cy="5.5" r="3.75" fill="none" stroke="#9c9c9c" stroke-width=".9"/><path d="M3.7 5.5 H7.3" stroke="#9c9c9c" stroke-width=".85"/></svg>
<div class="a" style="left:388.8px;top:410.8px;width:7.2px;height:1.7px;background:#dedede;"></div>
<div class="a" style="left:388.8px;top:413.6px;width:7.2px;height:1.7px;background:#dedede;"></div>
<div class="a" style="left:402.8px;top:406.6px;width:116.2px;height:13.4px;background:#ebebeb;border-radius:4px"></div>
<div class="t" style="left:409.4px;top:410px;font-size:8px;font-weight:400;color:#2a2a2a;">Datum</div>
<svg class="a" style="left:509.0px;top:408.8px" width="6" height="9" viewBox="0 0 6 9"><path d="M1.3 3.3 L3 1.7 L4.7 3.3 M1.3 5.7 L3 7.3 L4.7 5.7" fill="none" stroke="#333" stroke-width="1.15" stroke-linecap="round" stroke-linejoin="round"/></svg>
<div class="a" style="left:521.2px;top:406.6px;width:93.8px;height:13.4px;background:#ebebeb;border-radius:4px"></div>
<div class="t" style="left:527.8px;top:410px;font-size:8px;font-weight:400;color:#2a2a2a;">Liste mit Etiketten</div>
<svg class="a" style="left:604.0px;top:410.3px" width="7" height="6" viewBox="0 0 7 6"><path d="M1.4 1.9 L3.5 4 L5.6 1.9" fill="none" stroke="#444" stroke-width="1.3" stroke-linecap="round" stroke-linejoin="round"/></svg>
<div class="a" style="left:619.3px;top:407.6px;width:114.5px;height:11.4px;background:#fff;border:1px solid #e6e6e6"></div>
<div class="t" style="left:621px;top:410px;font-size:8px;font-weight:400;color:#222;">Datum - Liste mit Etiketten</div>
<svg class="a" style="left:736.3px;top:407.8px" width="11" height="11" viewBox="0 0 11 11"><circle cx="5.5" cy="5.5" r="3.75" fill="none" stroke="#9c9c9c" stroke-width=".9"/><path d="M3.7 5.5 H7.3" stroke="#9c9c9c" stroke-width=".85"/></svg>
<div class="a" style="left:388.8px;top:432.2px;width:7.2px;height:1.7px;background:#dedede;"></div>
<div class="a" style="left:388.8px;top:435.0px;width:7.2px;height:1.7px;background:#dedede;"></div>
<div class="a" style="left:402.8px;top:428.0px;width:116.2px;height:13.4px;background:#ebebeb;border-radius:4px"></div>
<div class="t" style="left:409.4px;top:431px;font-size:8px;font-weight:400;color:#2a2a2a;">Geburtstag</div>
<svg class="a" style="left:509.0px;top:430.2px" width="6" height="9" viewBox="0 0 6 9"><path d="M1.3 3.3 L3 1.7 L4.7 3.3 M1.3 5.7 L3 7.3 L4.7 5.7" fill="none" stroke="#333" stroke-width="1.15" stroke-linecap="round" stroke-linejoin="round"/></svg>
<div class="a" style="left:619.3px;top:429.0px;width:114.5px;height:11.4px;background:#fff;border:1px solid #e6e6e6"></div>
<div class="t" style="left:621px;top:432px;font-size:8px;font-weight:400;color:#222;">Geburtstag</div>
<svg class="a" style="left:736.3px;top:429.2px" width="11" height="11" viewBox="0 0 11 11"><circle cx="5.5" cy="5.5" r="3.75" fill="none" stroke="#9c9c9c" stroke-width=".9"/><path d="M3.7 5.5 H7.3" stroke="#9c9c9c" stroke-width=".85"/></svg>
</div></body></html>
